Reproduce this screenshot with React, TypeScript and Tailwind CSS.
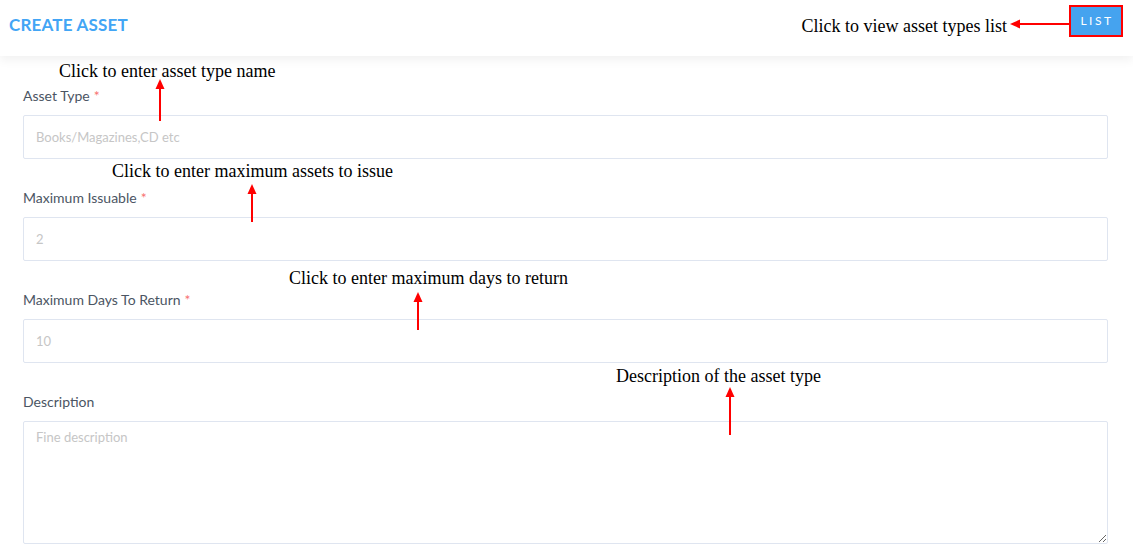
import React from 'react';

type Field = {
  label: string;
  placeholder: string;
  required?: boolean;
};

const fields: Field[] = [
  { label: 'Asset Type', placeholder: 'Books/Magazines,CD etc', required: true },
  { label: 'Maximum Issuable', placeholder: '2', required: true },
  { label: 'Maximum Days To Return', placeholder: '10', required: true },
];

// red annotation arrow pointing up
const UpArrow: React.FC<{ h: number; className?: string }> = ({ h, className }) => (
  <svg className={className} width="12" height={h} viewBox={`0 0 12 ${h}`}>
    <line x1="6" y1="9" x2="6" y2={h} stroke="#f00" strokeWidth="2" />
    <polygon points="6,0 1.5,10 10.5,10" fill="#f00" />
  </svg>
);

const App: React.FC = () => {
  return (
    <div className="relative min-h-[549px] bg-white font-['Lato','Open_Sans',sans-serif]">
      {/* Header */}
      <header className="relative z-10 flex h-14 items-center justify-between bg-white pb-[6px] pl-[9px] pr-[10px] shadow-[0_4px_10px_rgba(0,0,0,0.06)]">
        <h1 className="text-[17px] font-bold tracking-[0.2px] text-[#42a5f5]">CREATE ASSET</h1>
        <div className="flex items-start self-start pt-[5px]">
          <span className="mt-[12px] font-['Liberation_Serif',serif] text-[18px] leading-[18px] text-black">
            Click to view asset types list
          </span>
          <svg className="ml-[3px] mt-[13px]" width="59" height="12" viewBox="0 0 59 12">
            <line x1="9" y1="6" x2="59" y2="6" stroke="#f00" strokeWidth="2" />
            <polygon points="0,6 10,1.5 10,10.5" fill="#f00" />
          </svg>
          <button className="flex h-8 w-[54px] items-center justify-center border-2 border-[#ff0000] bg-[#45a3ef] pl-[2px] text-[12px] tracking-[2.5px] text-white">
            LIST
          </button>
        </div>
      </header>

      {/* Form */}
      <form className="flex flex-col gap-[29px] pl-[23px] pr-[25px] pt-[30px]">
        {fields.map((f) => (
          <div key={f.label} className="flex flex-col gap-[9px]">
            <label className="h-5 text-[14px] leading-5 text-[#4b5563]">
              {f.label}
              {f.required && <span className="ml-1 text-[#f87171]">*</span>}
            </label>
            <input
              className="h-11 w-full rounded-[2px] border border-[#dfe5f0] px-3 text-[13px] outline-none placeholder:text-[#c6c6c6]"
              placeholder={f.placeholder}
            />
          </div>
        ))}
        <div className="flex flex-col gap-[9px]">
          <label className="h-5 text-[14px] leading-5 text-[#4b5563]">Description</label>
          <textarea
            className="h-[123px] w-full rounded-[2px] border border-[#dfe5f0] px-3 py-[6px] text-[13px] outline-none placeholder:text-[#c6c6c6]"
            placeholder="Fine description"
          />
        </div>
      </form>

      {/* Annotations laid over the form */}
      <div className="pointer-events-none absolute inset-0 z-20 font-['Liberation_Serif',serif] text-[18px] leading-[18px] text-black">
        <div className="absolute left-[59px] top-[62px] flex flex-col">
          <span>Click to enter asset type name</span>
          <UpArrow className="ml-[95px] mt-[-1px]" h={42} />
        </div>
        <div className="absolute left-[112px] top-[162px] flex flex-col">
          <span>Click to enter maximum assets to issue</span>
          <UpArrow className="ml-[134px] mt-[4px]" h={38} />
        </div>
        <div className="absolute left-[289px] top-[269px] flex flex-col">
          <span>Click to enter maximum days to return</span>
          <UpArrow className="ml-[123px] mt-[5px]" h={38} />
        </div>
        <div className="absolute left-[616px] top-[367px] flex flex-col">
          <span>Description of the asset type</span>
          <UpArrow className="ml-[108px] mt-[2px]" h={48} />
        </div>
      </div>
    </div>
  );
};

export default App;
